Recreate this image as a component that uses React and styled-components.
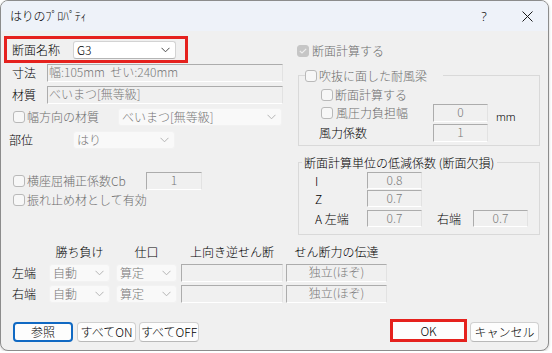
import React from "react";
import styled, { createGlobalStyle } from "styled-components";

const Global = createGlobalStyle`
  html, body { margin: 0; padding: 0; background: #ffffff; }
  body {
    font-family: "Noto Sans CJK JP", "Noto Sans", sans-serif;
    font-size: 12px;
    font-weight: 300;
    color: #000;
  }
  *, *::before, *::after { box-sizing: border-box; }
`;

const Window = styled.div`
  width: 549px;
  height: 351px;
  border: 1px solid #8c8c8c;
  border-radius: 8px;
  overflow: hidden;
  background: #f0f0f0;
  display: flex;
  flex-direction: column;
  box-shadow: 0 1px 3px rgba(0, 0, 0, 0.2);
`;

const TitleBar = styled.div`
  height: 30px;
  flex: none;
  background: #eef2f9;
  display: flex;
  align-items: center;
  padding-left: 9px;
`;

const TitleText = styled.div`
  font-size: 12px;
  line-height: 30px;
  flex: 1;
  letter-spacing: -0.2px;
`;

const TitleBtn = styled.div`
  width: ${(p) => p.$w}px;
  height: 30px;
  display: flex;
  align-items: center;
  justify-content: center;
  font-family: "Noto Sans", "DejaVu Sans", sans-serif;
  font-size: 13px;
`;

const Body = styled.div`
  flex: 1;
  display: flex;
  flex-direction: column;
`;

const TopArea = styled.div`
  display: flex;
  align-items: flex-start;
`;

const LeftCol = styled.div`
  margin-left: 3px;
  width: 279px;
  display: flex;
  flex-direction: column;
`;

const RightCol = styled.div`
  margin-left: 14px;
  width: 243px;
  display: flex;
  flex-direction: column;
`;

const RedBox = styled.div`
  margin-top: 5px;
  width: 184px;
  height: 27px;
  border: 3px solid #e5211d;
  display: flex;
  align-items: center;
  padding-left: 5px;
`;

const Row = styled.div`
  display: flex;
  align-items: center;
  height: ${(p) => p.$h || 18}px;
  margin-top: ${(p) => p.$mt || 0}px;
  padding-left: ${(p) => p.$pl || 0}px;
`;

const Label = styled.div`
  width: ${(p) => (p.$w ? `${p.$w}px` : "auto")};
  flex: none;
  margin-left: ${(p) => p.$ml || 0}px;
  line-height: 16px;
  white-space: nowrap;
  color: ${(p) => (p.$dis ? "#6d6d6d" : "#000")};
`;

const Field = styled.div`
  width: ${(p) => (p.$w ? `${p.$w}px` : "auto")};
  flex: ${(p) => (p.$w ? "none" : "1")};
  height: ${(p) => p.$h || 18}px;
  margin-left: ${(p) => p.$ml || 0}px;
  margin-right: ${(p) => p.$mr || 0}px;
  border: 1px solid #acacac;
  border-right-color: #e2e2e2;
  border-bottom-color: #ffffff;
  background: #f0f0f0;
  color: #7a7a7a;
  text-align: ${(p) => p.$align || "center"};
  padding-left: ${(p) => (p.$align === "left" ? 1 : 0)}px;
  line-height: ${(p) => (p.$h || 18) - 4}px;
  font-size: 12px;
  white-space: nowrap;
  overflow: hidden;
`;

const Combo = styled.div`
  width: ${(p) => p.$w}px;
  height: 18px;
  flex: none;
  margin-left: ${(p) => p.$ml || 0}px;
  margin-right: ${(p) => p.$mr || 0}px;
  border-radius: 3px;
  border: 1px solid ${(p) => (p.$on ? "#d3d3d3" : "#f2f2f2")};
  border-bottom-color: ${(p) => (p.$on ? "#b5b5b5" : "#f2f2f2")};
  background: ${(p) => (p.$on ? "#ffffff" : "#f9f9f9")};
  display: flex;
  align-items: center;
  padding-left: 3px;
  padding-right: 5px;
  color: ${(p) => (p.$on ? "#000" : "#777")};
  line-height: 16px;
  white-space: nowrap;
`;

const ComboText = styled.span`
  flex: 1;
  overflow: hidden;
`;

const Chevron = ({ on }) => (
  <svg width="9" height="6" viewBox="0 0 9 6">
    <polyline
      points="0.5,0.8 4.5,4.8 8.5,0.8"
      fill="none"
      stroke={on ? "#4a4a4a" : "#b4b4b4"}
      strokeWidth="1"
    />
  </svg>
);

const Box = styled.div`
  width: 12px;
  height: 12px;
  flex: none;
  border-radius: 3px;
  border: 1px solid ${(p) => (p.$checked ? "#c6c6c6" : "#b9b9b9")};
  background: ${(p) => (p.$checked ? "#c6c6c6" : "#f7f7f7")};
  margin-right: ${(p) => p.$gap || 2}px;
  display: flex;
  align-items: center;
  justify-content: center;
`;

const CheckBox = ({ checked, gap }) => (
  <Box $checked={checked} $gap={gap}>
    {checked && (
      <svg width="8" height="6" viewBox="0 0 8 6">
        <polyline points="0.8,3 3,5 7.2,0.8" fill="none" stroke="#eeeeee" strokeWidth="1.1" />
      </svg>
    )}
  </Box>
);

const Group = styled.div`
  position: relative;
  margin-top: 16px;
  margin-left: 1px;
  width: 242px;
  height: ${(p) => p.$h}px;
  border: 1px solid #d9d9d9;
  display: flex;
  flex-direction: column;
  padding-left: ${(p) => p.$pl}px;
  padding-top: ${(p) => p.$pt}px;
`;

const Legend = styled.div`
  position: absolute;
  top: -9px;
  left: ${(p) => p.$left}px;
  height: 17px;
  background: #f0f0f0;
  display: flex;
  align-items: center;
  padding-left: ${(p) => p.$padl}px;
  padding-right: ${(p) => p.$padr}px;
  line-height: 16px;
  color: ${(p) => (p.$dis ? "#6d6d6d" : "#000")};
  white-space: nowrap;
`;

const Unit = styled.div`
  margin-left: 8px;
  margin-top: 6px;
  font-family: "Noto Sans", sans-serif;
  font-size: 11px;
`;

const BottomGrid = styled.div`
  margin-top: 10px;
  margin-left: 11px;
  display: grid;
  grid-template-columns: 37px 67px 65px 105px 101px;
  grid-template-rows: 14px 23px 21px;
  align-items: end;
`;

const Head = styled.div`
  width: ${(p) => p.$w}px;
  text-align: center;
  line-height: 14px;
  white-space: nowrap;
`;

const RowLabel = styled.div`
  line-height: 18px;
`;

const ButtonRow = styled.div`
  margin-top: 16px;
  height: 23px;
  display: flex;
  align-items: flex-end;
  padding-left: 12px;
  padding-right: 9px;
`;

const Button = styled.div`
  width: ${(p) => p.$w}px;
  height: 20px;
  margin-left: ${(p) => p.$ml || 0}px;
  border-radius: 4px;
  background: #fdfdfd;
  border: ${(p) => (p.$focus ? "2px solid #1069c3" : "1px solid #d0d0d0")};
  border-bottom-color: ${(p) => (p.$focus ? "#1069c3" : "#b9b9b9")};
  display: flex;
  align-items: center;
  justify-content: center;
  line-height: 16px;
  white-space: nowrap;
`;

const Spacer = styled.div`
  flex: 1;
`;

const Highlight = styled.div`
  width: 77px;
  height: 23px;
  border: 3px solid #e5211d;
  background: #fdfdfd;
  display: flex;
  align-items: center;
  justify-content: center;
  line-height: 16px;
`;

export default function App() {
  return (
    <>
      <Global />
      <Window>
        <TitleBar>
          <TitleText>はりのﾌﾟﾛﾊﾟﾃｨ</TitleText>
          <TitleBtn $w={44}>?</TitleBtn>
          <TitleBtn $w={42}>
            <svg width="11" height="11" viewBox="0 0 11 11">
              <path d="M0.5 0.5 L10.5 10.5 M10.5 0.5 L0.5 10.5" stroke="#1a1a1a" strokeWidth="1" />
            </svg>
          </TitleBtn>
        </TitleBar>
        <Body>
          <TopArea>
            <LeftCol>
              <RedBox>
                <Label $w={61}>断面名称</Label>
                <Combo $w={103} $on>
                  <ComboText>G3</ComboText>
                  <Chevron on />
                </Combo>
              </RedBox>
              <Row $mt={1} $pl={8}>
                <Label $w={35}>寸法</Label>
                <Field $align="left">幅:105mm&nbsp; せい:240mm</Field>
              </Row>
              <Row $mt={4} $pl={8}>
                <Label $w={35}>材質</Label>
                <Field $align="left">べいまつ[無等級]</Field>
              </Row>
              <Row $mt={4} $pl={9}>
                <CheckBox />
                <Label $dis>幅方向の材質</Label>
                <Spacer />
                <Combo $w={164} $mr={1}>
                  <ComboText>べいまつ[無等級]</ComboText>
                  <Chevron />
                </Combo>
              </Row>
              <Row $mt={5} $pl={5}>
                <Label $w={64}>部位</Label>
                <Combo $w={102}>
                  <ComboText>はり</ComboText>
                  <Chevron />
                </Combo>
              </Row>
              <Row $mt={23} $pl={9}>
                <CheckBox />
                <Label $dis $w={119}>横座屈補正係数Cb</Label>
                <Field $w={56} $h={18}>1</Field>
              </Row>
              <Row $mt={1} $pl={9}>
                <CheckBox />
                <Label $dis>振れ止め材として有効</Label>
              </Row>
            </LeftCol>
            <RightCol>
              <Row $mt={12} $h={16}>
                <CheckBox checked gap={3} />
                <Label $dis>断面計算する</Label>
              </Row>
              <Group $h={71} $pl={22} $pt={11}>
                <Legend $left={6} $padl={0} $padr={16} $dis>
                  <CheckBox gap={2} />
                  吹抜に面した耐風梁
                </Legend>
                <Row $h={16}>
                  <CheckBox gap={2} />
                  <Label $dis>断面計算する</Label>
                </Row>
                <Row $mt={1} $h={18}>
                  <CheckBox gap={3} />
                  <Label $dis $w={97}>風圧力負担幅</Label>
                  <Field $w={55}>0</Field>
                  <Unit>mm</Unit>
                </Row>
                <Row $mt={2} $h={18}>
                  <Label $ml={-2} $w={114}>風力係数</Label>
                  <Field $w={55}>1</Field>
                </Row>
              </Group>
              <Group $h={73} $pl={16} $pt={9}>
                <Legend $left={3} $padl={2} $padr={3}>
                  断面計算単位の低減係数 (断面欠損)
                </Legend>
                <Row $h={17}>
                  <Label $w={52}>I</Label>
                  <Field $w={55} $h={17}>0.8</Field>
                </Row>
                <Row $h={17} $mt={1}>
                  <Label $w={52}>Z</Label>
                  <Field $w={55} $h={17}>0.7</Field>
                </Row>
                <Row $h={17} $mt={3}>
                  <Label $w={52}>A 左端</Label>
                  <Field $w={55} $h={17}>0.7</Field>
                  <Label $ml={15} $w={36}>右端</Label>
                  <Field $w={55} $h={17}>0.7</Field>
                </Row>
              </Group>
            </RightCol>
          </TopArea>
          <BottomGrid>
            <div />
            <Head $w={61}>勝ち負け</Head>
            <Head $w={61}>仕口</Head>
            <Head $w={102}>上向き逆せん断</Head>
            <Head $w={101}>せん断力の伝達</Head>

            <RowLabel>左端</RowLabel>
            <Combo $w={61}>
              <ComboText>自動</ComboText>
              <Chevron />
            </Combo>
            <Combo $w={61}>
              <ComboText>算定</ComboText>
              <Chevron />
            </Combo>
            <Field $w={102} />
            <Field $w={101}>独立(ほぞ)</Field>

            <RowLabel>右端</RowLabel>
            <Combo $w={61}>
              <ComboText>自動</ComboText>
              <Chevron />
            </Combo>
            <Combo $w={61}>
              <ComboText>算定</ComboText>
              <Chevron />
            </Combo>
            <Field $w={102} />
            <Field $w={101}>独立(ほぞ)</Field>
          </BottomGrid>
          <ButtonRow>
            <Button $w={60} $focus>参照</Button>
            <Button $w={59} $ml={4}>すべてON</Button>
            <Button $w={60} $ml={3}>すべてOFF</Button>
            <Spacer />
            <Highlight>OK</Highlight>
            <Button $w={69} $ml={3}>キャンセル</Button>
          </ButtonRow>
        </Body>
      </Window>
    </>
  );
}
